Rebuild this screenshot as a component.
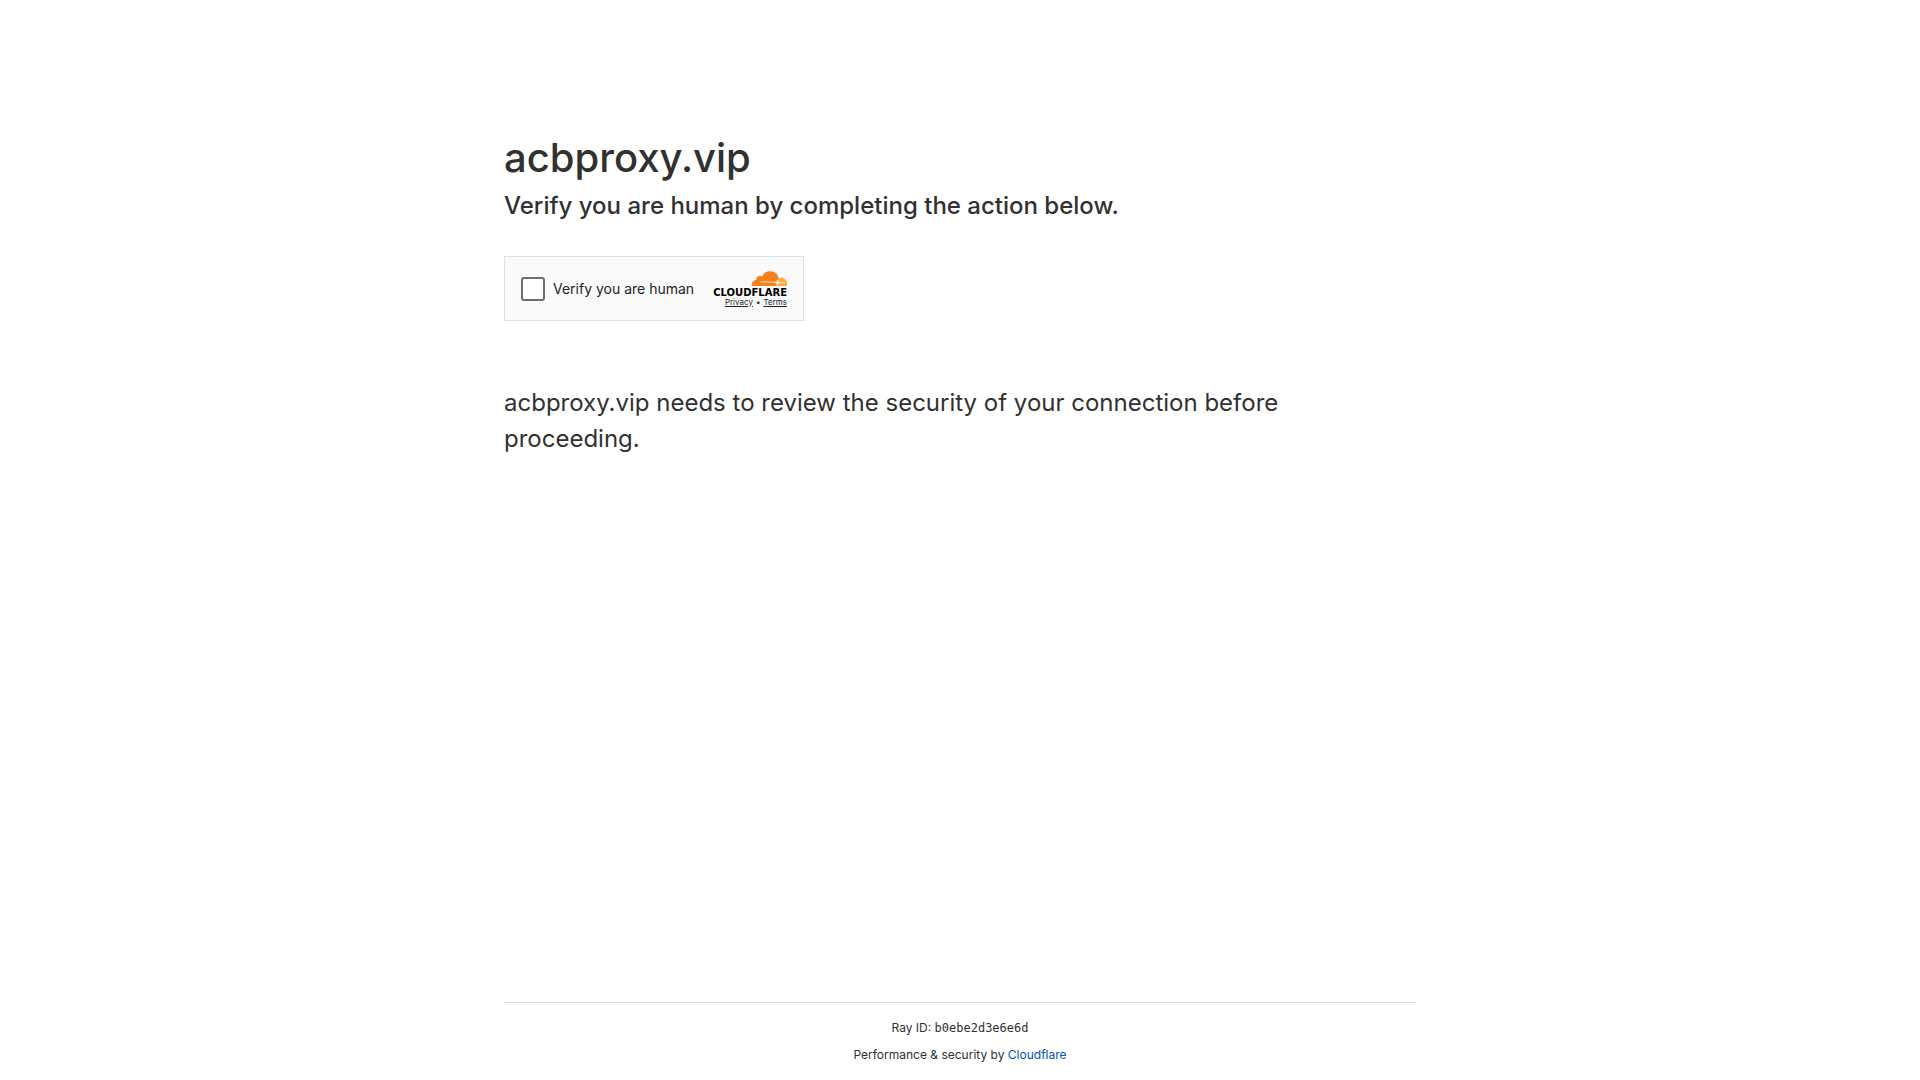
<div class="page">
  <main>
    <h1>acbproxy.vip</h1>
    <h2>Verify you are human by completing the action below.</h2>
    <div class="widget">
      <label><input type="checkbox" /><span>Verify you are human</span></label>
      <div class="brand">
        <svg class="logo" viewBox="0 0 73 26" role="img" aria-label="Cloudflare">
          <g transform="translate(0 -1)">
            <path fill="#fbad41" d="M62.500 16 64.200 8.200a8 8 0 0 1 2.800-.700 6.200 6.200 0 0 1 6 6.500l-.200 2z" />
            <path fill="#f6821f" d="M37.700 16a4.900 4.900 0 0 1 4.500-5.900 3.800 3.800 0 0 1 5.900-3.600A8.800 8.800 0 0 1 64.500 7.500L62.500 16z" />
            <path fill="none" stroke="#fcd3ae" stroke-width="1.200" d="M46.500 12h15.500M65 12.500h6" />
            <path fill="#fff" d="m63.500 9.500 1 2.300 2 .900-2 .900-1 2.200-1-2.200-2-.900 2-.900z" />
          </g>
          <text class="wordmark" x="73" y="25" text-anchor="end">CLOUDFLARE</text>
        </svg>
        <div class="links"><a href="#privacy">Privacy</a><span>•</span><a href="#terms">Terms</a></div>
      </div>
    </div>
    <p>acbproxy.vip needs to review the security of your connection before proceeding.</p>
  </main>
  <footer>
    <div>Ray ID: <code>b0ebe2d3e6e6d</code></div>
    <div>Performance &amp; security by <a href="#cloudflare">Cloudflare</a></div>
  </footer>
</div>

<style>
  :global(body) { margin: 0; background: #fff; }
  .page { min-height: 100vh; display: flex; flex-direction: column; box-sizing: border-box; padding: 0 24px; font-family: Inter, sans-serif; color: #313131; }
  main { flex: 1; width: 100%; max-width: 912px; margin: 0 auto; padding-top: 128px; }
  h1 { margin: 0; font-size: 40px; line-height: 60px; font-weight: 500; }
  h2 { margin: 0; font-size: 24px; line-height: 36px; font-weight: 500; }
  .widget { max-width: 300px; min-height: 65px; box-sizing: border-box; margin-top: 32px; border: 1px solid #e0e0e0; background: #fafafa; display: flex; justify-content: space-between; align-items: center; padding: 0 16px; }
  label { display: flex; align-items: center; gap: 8px; font-size: 14px; color: #232323; }
  input { appearance: none; width: 24px; height: 24px; margin: 0; box-sizing: border-box; border: 2px solid #6d6d6d; border-radius: 3px; background: #fff; }
  input:checked { background: #6d6d6d; }
  .logo { width: 73px; height: 26px; display: block; overflow: visible; }
  .wordmark { font-family: "DejaVu Sans", sans-serif; font-size: 10px; font-weight: 700; fill: #000; }
  .links { display: flex; justify-content: flex-end; gap: 3px; font-size: 8px; line-height: 10px; color: #232323; }
  .links a { color: inherit; text-decoration: underline; }
  p { margin: 64px 0 0; font-size: 24px; line-height: 36px; }
  footer { width: 100%; max-width: 912px; margin: 0 auto; border-top: 1px solid #d9d9d9; padding: 16px 0; box-sizing: border-box; display: grid; gap: 9px; font-size: 12px; line-height: 18px; text-align: center; }
  footer a { color: #0051c3; text-decoration: none; }
  code { font-family: "DejaVu Sans Mono", monospace; font-size: 12px; line-height: 16px; }
</style>
